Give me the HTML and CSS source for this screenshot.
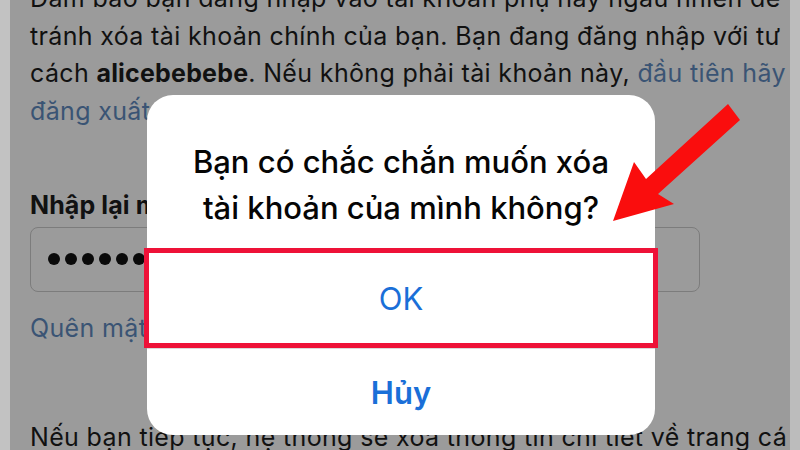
FILE: index.html
```html
<!DOCTYPE html>
<html lang="vi">
<head>
<meta charset="utf-8">
<link rel="stylesheet" href="styles.css">
</head>
<body>
<div class="screen">
  <div class="edge edge-left"></div>
  <main class="page">
    <p class="intro">Đảm bảo bạn đang nhập vào tài khoản phụ hay ngẫu nhiên để<br>tránh xóa tài khoản chính của bạn. Bạn đang đăng nhập với tư<br>cách <b>alicebebebe</b>. Nếu không phải tài khoản này, <span class="link">đầu tiên hãy</span><br><span class="link">đăng xuất.</span></p>
    <div class="label">Nhập lại mật khẩu</div>
    <div class="field"><span class="dot"></span><span class="dot"></span><span class="dot"></span><span class="dot"></span><span class="dot"></span><span class="dot"></span><span class="dot"></span></div>
    <div class="link forgot">Quên mật khẩu?</div>
    <p class="outro">Nếu bạn tiếp tục, hệ thống sẽ xóa thông tin chi tiết về trang cá</p>
  </main>
  <div class="edge edge-right"></div>

  <div class="alert">
    <div class="alert-title">Bạn có chắc chắn muốn xóa<br>tài khoản của mình không?</div>
    <div class="alert-btn ok">OK</div>
    <div class="alert-btn cancel">Hủy</div>
  </div>
  <div class="highlight"></div>
  <svg class="arrow" width="800" height="450" viewBox="0 0 800 450">
    <polygon points="728,104 740,120 658,194 674,204 613,221 634,162 646,179" fill="#fa0d0d"/>
  </svg>
</div>
</body>
</html>
```
FILE: styles.css
```css
* { box-sizing: border-box; }
html, body { margin: 0; padding: 0; }
body {
  width: 800px;
  height: 450px;
  overflow: hidden;
  font-family: Inter, "Noto Sans", "DejaVu Sans", sans-serif;
}
.screen {
  position: relative;
  display: flex;
  width: 800px;
  height: 450px;
  overflow: hidden;
  background: #9b9b9b;
}
.edge { flex: 0 0 10px; }
.edge-left { background: #c2c2c2; }
.edge-right { background: #bcbcbc; }
.page {
  flex: 1;
  min-width: 0;
  overflow: hidden;
  padding-left: 20px;
  color: #111;
  font-size: 25px;
  letter-spacing: 0.35px;
  line-height: 37.5px;
  white-space: nowrap;
}
.intro {
  margin: -20px 0 0;
}
.intro b { font-weight: 700; letter-spacing: 0.2px; }
.link { color: #3a5474; }
.label {
  margin-top: 57px;
  font-weight: 700;
  letter-spacing: 0.1px;
}
.field {
  margin-top: 2px;
  width: 670px;
  height: 65px;
  border: 1.5px solid #7c7c7c;
  border-radius: 8px;
  display: flex;
  align-items: center;
  gap: 5px;
  padding-left: 17px;
}
.dot {
  flex: 0 0 12px;
  width: 12px;
  height: 12px;
  border-radius: 50%;
  background: #0a0a0a;
}
.forgot { margin-top: 18.5px; }
.outro { margin: 71.5px 0 0; }

.alert {
  position: absolute;
  left: 147px;
  top: 95px;
  width: 508px;
  height: 340px;
  background: #fff;
  border-radius: 26px;
  display: flex;
  flex-direction: column;
  overflow: hidden;
}
.alert-title {
  height: 153px;
  padding-top: 44px;
  text-align: center;
  font-size: 31px;
  line-height: 46px;
  font-weight: 500;
  color: #050505;
}
.alert-btn {
  display: flex;
  align-items: center;
  justify-content: center;
  border-top: 1px solid #dadada;
  color: #1a6fd8;
  font-size: 31px;
}
.ok { height: 100px; }
.cancel { flex: 1; font-weight: 600; }
.highlight {
  position: absolute;
  left: 144px;
  top: 248px;
  width: 514px;
  height: 100px;
  border: 5px solid #ee1238;
}
.arrow {
  position: absolute;
  left: 0;
  top: 0;
}
```
